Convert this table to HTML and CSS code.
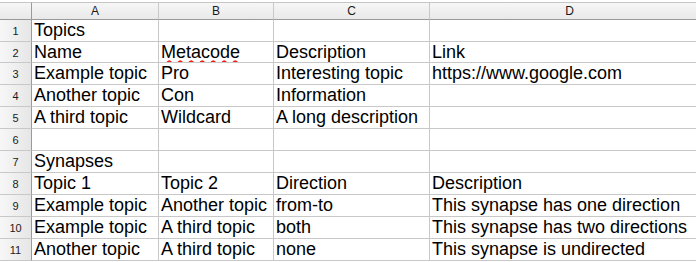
FILE: index.html
```html
<!DOCTYPE html>
<html>
<head>
<meta charset="utf-8">
<link rel="stylesheet" href="styles.css">
</head>
<body>
<div class="sheet">
  <div class="corner"></div><div class="colh">A</div><div class="colh">B</div><div class="colh">C</div><div class="colh">D</div>

  <div class="rowh">1</div><div class="cell">Topics</div><div class="cell"></div><div class="cell"></div><div class="cell"></div>
  <div class="rowh">2</div><div class="cell">Name</div><div class="cell"><span class="spell">Metacode</span></div><div class="cell">Description</div><div class="cell">Link</div>
  <div class="rowh">3</div><div class="cell">Example topic</div><div class="cell">Pro</div><div class="cell">Interesting topic</div><div class="cell">https://www.google.com</div>
  <div class="rowh">4</div><div class="cell">Another topic</div><div class="cell">Con</div><div class="cell">Information</div><div class="cell"></div>
  <div class="rowh">5</div><div class="cell">A third topic</div><div class="cell">Wildcard</div><div class="cell">A long description</div><div class="cell"></div>
  <div class="rowh">6</div><div class="cell"></div><div class="cell"></div><div class="cell"></div><div class="cell"></div>
  <div class="rowh">7</div><div class="cell">Synapses</div><div class="cell"></div><div class="cell"></div><div class="cell"></div>
  <div class="rowh">8</div><div class="cell">Topic 1</div><div class="cell">Topic 2</div><div class="cell">Direction</div><div class="cell">Description</div>
  <div class="rowh">9</div><div class="cell">Example topic</div><div class="cell">Another topic</div><div class="cell">from-to</div><div class="cell">This synapse has one direction</div>
  <div class="rowh">10</div><div class="cell">Example topic</div><div class="cell">A third topic</div><div class="cell">both</div><div class="cell">This synapse has two directions</div>
  <div class="rowh">11</div><div class="cell">Another topic</div><div class="cell">A third topic</div><div class="cell">none</div><div class="cell">This synapse is undirected</div>
</div>
</body>
</html>
```

FILE: styles.css
```css
html, body {
  margin: 0;
  padding: 0;
  background: #ffffff;
  overflow: hidden;
}
body {
  padding-top: 2px;
  font-family: "Liberation Sans", Arial, sans-serif;
}
.sheet {
  display: grid;
  grid-template-columns: 32px 127px 115px 156px 280px;
  grid-template-rows: 18px 22px 21px;
  grid-auto-rows: 22px;
}
.corner, .colh {
  box-sizing: border-box;
  border-top: 1px solid #c6c6c6;
  border-bottom: 1px solid #9a9a9a;
  border-right: 1px solid #c8c8c8;
  background: linear-gradient(to bottom, #f6f6f6, #e9e9e9);
}
.corner {
  border-right: 1px solid #9a9a9a;
}
.colh {
  font-size: 12px;
  line-height: 16px;
  text-align: center;
  color: #1a1a1a;
}
.rowh {
  box-sizing: border-box;
  border-right: 1px solid #9a9a9a;
  border-bottom: 1px solid #c8c8c8;
  background: linear-gradient(to right, #f7f7f7, #e6e6e6);
  font-size: 11px;
  line-height: 21px;
  text-align: center;
  color: #1a1a1a;
  padding-top: 1px;
}
.cell {
  box-sizing: border-box;
  border-right: 1px solid #c8c8c8;
  border-bottom: 1px solid #c8c8c8;
  font-size: 18px;
  line-height: 21px;
  padding-left: 2px;
  color: #000000;
  white-space: nowrap;
  overflow: hidden;
}
.spell {
  text-decoration: underline wavy #f01c14;
  text-decoration-thickness: 1.5px;
  text-underline-offset: 2px;
  text-decoration-skip-ink: none;
}
```
